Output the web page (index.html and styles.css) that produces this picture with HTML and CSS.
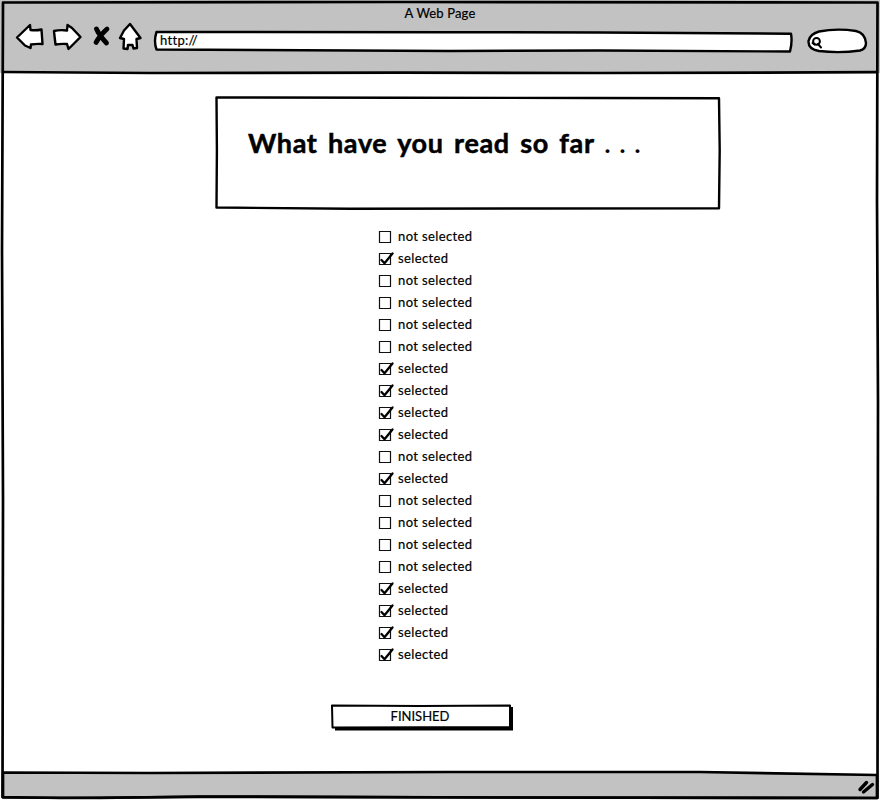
FILE: index.html
```
<!DOCTYPE html>
<html lang="en">
<head>
<meta charset="utf-8">
<title>A Web Page</title>
<link rel="stylesheet" href="styles.css">
</head>
<body>
<div class="window">
  <header class="chrome">
    <div class="title">A Web Page</div>
    <div class="toolbar">
      <svg class="nav" width="130" height="32" viewBox="14 20 130 32">
        <g class="ink">
          <path d="M17 37.500L30 25L30.500 30Q36 30.800 41.500 29.500L42.500 44Q37 43.500 31 44.500L30.500 48L25 45.500Z"/>
          <path d="M54 31Q60 29.500 67 30.500L67.500 25L72 28L80.500 37L68.500 49L67 44Q61 43.500 55.500 44.500L54.500 36Z"/>
          <path d="M130 24L140.500 38L136.500 39L137 48L133.500 48.500L132.500 45L128 45L127.500 49L123.500 48.500L124 39L120 38L124 30.500Z"/>
        </g>
        <path class="cross" d="M96.500 29Q99 35 106.500 43M107 29Q100 35 96 42.500"/>
      </svg>
      <div class="address">
        <svg class="shape" width="640" height="24" viewBox="153 30 640 24"><path class="ink" d="M156.500 32L450 32.200L600 32.500L791 33.700Q792.500 42 790 51.500L600 50.500L450 51L156.500 49.500Q153.500 41 156.500 32Z"/></svg>
        <span>http://</span>
      </div>
      <svg class="search" width="62" height="28" viewBox="806 27 62 28">
        <path class="ink" d="M819 31.500Q837 28 856 31Q865 33 866 43Q866 49 860 50.500Q840 53.500 819 51Q808 49 808.500 41Q810 34 819 31.500Z"/>
        <circle class="lens" cx="816.500" cy="41.300" r="3.400"/><path class="lens" d="M818 44L821 47.500M812.500 43L814.500 44.500"/>
      </svg>
    </div>
  </header>
  <main>
    <section class="banner">
      <svg class="shape" width="508" height="116" viewBox="214 95 508 116"><path class="ink" d="M216.500 97.500L400 97.800L590 98L719 98.300L719.700 150L719 208.200L540 208.500L350 208.700L216.500 207.500L216.900 150Z"/></svg>
      <h1>What have you read so far <span class="dots">. . .</span></h1>
    </section>
    <ul class="list" id="list"></ul>
    <button class="finish">
      <svg class="shape" width="184" height="28" viewBox="330 704 184 28"><path d="M335 709L513 707V730.500L335 730.500Z"/><path class="ink edge" d="M332 705.500L420 706L510 705.500L510 727L332.500 727.500Z"/></svg>
      <span>FINISHED</span>
    </button>
  </main>
  <footer><svg width="18" height="16" viewBox="858 779 18 16"><path class="grip" d="M860 789.500L866.500 782.500M863.500 792L872.500 784.500"/></svg></footer>
  <svg class="frame" width="880" height="800" viewBox="0 0 880 800">
    <path class="bottom" d="M3 772.500L150 773L450 772L700 772L877 775L877 798L500 797.500L200 796.500L100 798L3 797.500Z"/>
    <path class="grip" d="M860 789.500L866.500 782.500M863.500 792L872.500 784.500"/>
    <path d="M2.500 72L150 73L400 72.700L600 73L877 72.200"/>
    <path d="M3 2.500L400 2L877.500 2.500L877 200L878 400L877.500 798L500 797.500L200 796.800L60 798L2.500 797L3 500L2 250Z"/>
  </svg>
</div>
<script src="list.js"></script>
</body>
</html>
```
FILE: styles.css
```
* { box-sizing: border-box; }
body { margin: 0; background: #fff; color: #000; font: 13px/22px Lato, "Noto Sans", sans-serif; }
.window { position: relative; width: 880px; height: 800px; display: flex; flex-direction: column; }
.chrome { height: 73px; background: #c2c2c2; }
.title { height: 20px; padding-top: 2px; text-align: center; letter-spacing: .15px; -webkit-text-stroke: .2px #000; }
.toolbar { display: flex; align-items: flex-start; padding-left: 14px; }
.nav { margin-right: 9px; }
.address { position: relative; width: 640px; height: 24px; margin: 10px 13px 0 0; padding-left: 7px; line-height: 20px; letter-spacing: .3px; -webkit-text-stroke: .2px #000; }
.search { margin-top: 7px; }
.shape { position: absolute; left: 0; top: 0; }
.address span, .finish span, h1 { position: relative; }
.ink { fill: #fff; stroke: #000; stroke-width: 2.4; stroke-linejoin: round; }
.edge { stroke-width: 2; }
.cross { fill: none; stroke: #000; stroke-width: 4.8; stroke-linecap: round; }
.lens { fill: none; stroke: #000; stroke-width: 2; stroke-linecap: round; }
.grip { stroke: #000; stroke-width: 3.4; stroke-linecap: round; }
main { flex: 1; display: flex; flex-direction: column; align-items: flex-start; }
.banner { position: relative; width: 508px; height: 116px; margin: 22px 0 0 214px; padding: 31px 0 0 34px; }
h1 { margin: 0; font-size: 27px; line-height: 34px; letter-spacing: .65px; word-spacing: 3.2px; white-space: nowrap; -webkit-text-stroke: .5px #000; }
.dots { font-size: 25px; letter-spacing: 1px; word-spacing: 1px; -webkit-text-stroke: 0; }
.list { list-style: none; margin: 15px 0 0 377px; padding: 0; }
.list li { display: flex; align-items: center; height: 22px; letter-spacing: .38px; -webkit-text-stroke: .2px #000; }
.list span { padding-bottom: 2px; }
.list svg { margin-right: 3px; }
.box { fill: #fff; stroke: #111; stroke-width: 1.2; }
.tick { fill: none; stroke: #000; stroke-width: 2.3; stroke-linecap: round; stroke-linejoin: round; }
.finish { position: relative; width: 184px; height: 28px; margin: 38px 0 0 330px; padding: 0 4px 5px 0; border: 0; background: none; color: #000; font: 13px/22px Lato, "Noto Sans", sans-serif; -webkit-text-stroke: .2px #000; }
footer { height: 27px; padding: 6px 4px 0 0; display: flex; justify-content: flex-end; }
.frame { position: absolute; left: 0; top: 0; fill: none; stroke: #000; stroke-width: 2.7; stroke-linejoin: round; pointer-events: none; }
.frame .bottom { fill: #c2c2c2; }
```
FILE: list.js
```
const states = [0,1,0,0,0,0,1,1,1,1,0,1,0,0,0,0,1,1,1,1];
document.getElementById("list").innerHTML = states.map(on =>
  `<li><svg width="18" height="18" viewBox="0 0 18 18"><path class="box" d="M2.500 3.500H13.500V14.500H2.500Z"/>${on ? '<path class="tick" d="M4.500 10L7.500 13.200L15.500 3.500"/>' : ''}</svg><span>${on ? 'selected' : 'not selected'}</span></li>`
).join("");
```
